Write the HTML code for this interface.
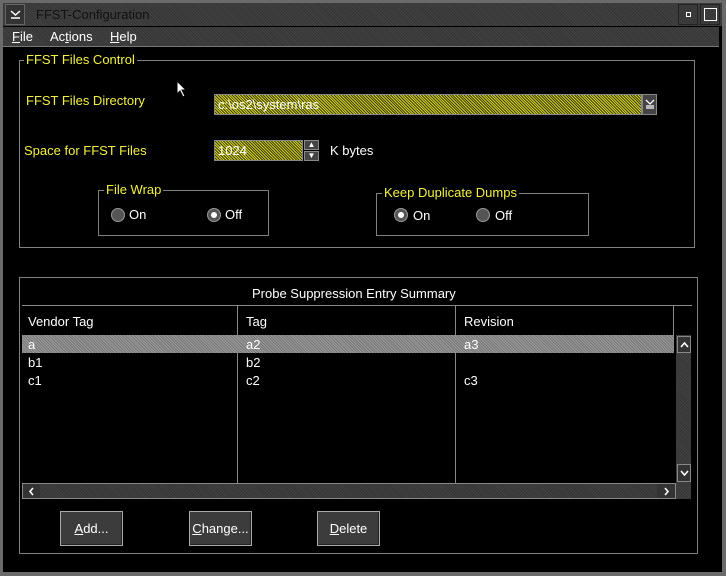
<!DOCTYPE html>
<html><head><style>
*{margin:0;padding:0;box-sizing:border-box}
body{width:726px;height:576px;background:#6a6a6a;position:relative;overflow:hidden;font-family:"Liberation Sans",sans-serif;font-size:13px;color:#fff}
.a{position:absolute}
.y{color:#f4f040}
.dith{background:#3a3a3a;background-image:repeating-linear-gradient(45deg,#444 0 1px,#333 1px 2px)}
.grp{position:absolute;border:1px solid #808080}
.lbl{position:absolute;background:#000;padding:0 2px;top:-9px;left:4px;white-space:nowrap}
.rad{position:absolute;width:14px;height:14px;border-radius:50%;background:#555;border:1px solid #999}
.rad.on::after{content:"";position:absolute;left:3px;top:3px;width:6px;height:6px;border-radius:50%;background:#fff}
.btn{position:absolute;width:63px;height:35px;background:#3c3c3c;border:1px solid #aaa;box-shadow:inset -1px -1px 0 #222;text-align:center;line-height:33px;color:#fff}
.btn u{text-decoration:underline}
.yf{background:#8a8a10;background-image:repeating-linear-gradient(45deg,#d0d020 0 1px,#404010 1px 2px)}
</style></head><body>
<div class="a" style="left:3px;top:3px;width:719px;height:569px;background:#000"></div>
<div class="a dith" style="left:3px;top:3px;width:719px;height:23px"></div>
<div class="a" style="left:5px;top:4px;width:20px;height:21px;background:#333;border:1px solid #666"><svg class="a" style="left:4px;top:4px" width="11" height="11"><path d="M1 2l4.5 4 4.5-4M1 9h9" stroke="#fff" stroke-width="1.5" fill="none"/></svg></div>
<div class="a" style="left:36px;top:7px;color:#111;font-size:13px">FFST-Configuration</div>
<div class="a" style="left:678px;top:4px;width:20px;height:21px;background:#3a3a3a;border:1px solid #222"><div class="a" style="left:7px;top:7px;width:5px;height:5px;border:1px solid #fff"></div></div>
<div class="a" style="left:700px;top:4px;width:20px;height:21px;background:#3a3a3a;border:1px solid #222"><div class="a" style="left:3px;top:3px;width:13px;height:13px;border:1px solid #fff"></div></div>
<div class="a dith" style="left:3px;top:27px;width:716px;height:20px;border-bottom:1px solid #777"></div>
<div class="a" style="left:12px;top:29px"><u>F</u>ile</div>
<div class="a" style="left:50px;top:29px">Ac<u>t</u>ions</div>
<div class="a" style="left:110px;top:29px"><u>H</u>elp</div>

<div class="grp" style="left:19px;top:60px;width:676px;height:188px"><div class="lbl y">FFST Files Control</div></div>
<svg class="a" style="left:176px;top:80px" width="12" height="18"><path d="M1 1v13l3-3 3 6 2-1-3-6h4z" fill="#fff" stroke="#000"/></svg>
<div class="a y" style="left:26px;top:93px">FFST Files Directory</div>
<div class="a yf" style="left:214px;top:94px;width:428px;height:21px;border:1px solid #888"><span style="position:absolute;left:3px;top:2px;color:#fff">c:\os2\system\ras</span></div>
<div class="a" style="left:642px;top:94px;width:15px;height:21px;background:#444;border:1px solid #888"><svg class="a" style="left:2px;top:4px" width="10" height="11"><path d="M1 1l4 4 4-4M1 7h8M1 9h8" stroke="#fff" stroke-width="1.3" fill="none"/></svg></div>
<div class="a y" style="left:24px;top:143px">Space for FFST Files</div>
<div class="a yf" style="left:214px;top:140px;width:89px;height:21px;border:1px solid #888"><span style="position:absolute;left:3px;top:2px;color:#fff">1024</span></div>
<div class="a" style="left:304px;top:140px;width:15px;height:10px;background:#444;border:1px solid #888;font-size:8px;text-align:center;line-height:8px">&#9650;</div>
<div class="a" style="left:304px;top:151px;width:15px;height:10px;background:#444;border:1px solid #888;font-size:8px;text-align:center;line-height:8px">&#9660;</div>
<div class="a" style="left:330px;top:143px">K bytes</div>

<div class="grp" style="left:98px;top:190px;width:171px;height:46px"><div class="lbl y" style="left:5px">File Wrap</div>
<div class="rad" style="left:12px;top:17px"></div><div class="a" style="left:30px;top:16px">On</div>
<div class="rad on" style="left:108px;top:17px"></div><div class="a" style="left:126px;top:16px">Off</div></div>
<div class="grp" style="left:376px;top:193px;width:213px;height:43px"><div class="lbl y" style="left:5px">Keep Duplicate Dumps</div>
<div class="rad on" style="left:17px;top:14px"></div><div class="a" style="left:36px;top:14px">On</div>
<div class="rad" style="left:99px;top:14px"></div><div class="a" style="left:118px;top:14px">Off</div></div>

<div class="grp" style="left:19px;top:277px;width:679px;height:277px"></div>
<div class="a" style="left:252px;top:286px">Probe Suppression Entry Summary</div>
<div class="a" style="left:22px;top:305px;width:670px;height:1px;background:#888"></div>
<div class="a" style="left:237px;top:306px;width:1px;height:177px;background:#888"></div>
<div class="a" style="left:455px;top:306px;width:1px;height:177px;background:#888"></div>
<div class="a" style="left:673px;top:306px;width:1px;height:29px;background:#888"></div>
<div class="a" style="left:28px;top:314px">Vendor Tag</div>
<div class="a" style="left:246px;top:314px">Tag</div>
<div class="a" style="left:464px;top:314px">Revision</div>
<div class="a" style="left:22px;top:335px;width:652px;height:18px;background:#888;background-image:repeating-linear-gradient(45deg,#9a9a9a 0 1px,#777 1px 2px)"></div>
<div class="a" style="left:28px;top:337px">a</div><div class="a" style="left:246px;top:337px">a2</div><div class="a" style="left:464px;top:337px">a3</div>
<div class="a" style="left:28px;top:355px">b1</div><div class="a" style="left:246px;top:355px">b2</div>
<div class="a" style="left:28px;top:373px">c1</div><div class="a" style="left:246px;top:373px">c2</div><div class="a" style="left:464px;top:373px">c3</div>
<div class="a dith" style="left:676px;top:335px;width:15px;height:148px"></div>
<div class="a" style="left:677px;top:336px;width:14px;height:17px;background:#333;border:1px solid #888"><svg class="a" style="left:2px;top:4px" width="9" height="7"><path d="M1 6l3.5-4 3.5 4" stroke="#fff" stroke-width="1.6" fill="none"/></svg></div>
<div class="a" style="left:677px;top:464px;width:14px;height:18px;background:#333;border:1px solid #888"><svg class="a" style="left:2px;top:5px" width="9" height="7"><path d="M1 1l3.5 4 3.5-4" stroke="#fff" stroke-width="1.6" fill="none"/></svg></div>
<div class="a dith" style="left:22px;top:483px;width:654px;height:16px;border:1px solid #888"></div>
<div class="a" style="left:23px;top:484px;width:17px;height:14px;background:#333"><svg class="a" style="left:5px;top:3px" width="7" height="9"><path d="M5 1l-3 3.5 3 3.5" stroke="#fff" stroke-width="1.6" fill="none"/></svg></div>
<div class="a" style="left:657px;top:484px;width:18px;height:14px;background:#333"><svg class="a" style="left:6px;top:3px" width="7" height="9"><path d="M2 1l3 3.5-3 3.5" stroke="#fff" stroke-width="1.6" fill="none"/></svg></div>
<div class="a dith" style="left:676px;top:483px;width:15px;height:16px"></div>

<div class="btn" style="left:60px;top:511px"><u>A</u>dd...</div>
<div class="btn" style="left:189px;top:511px"><u>C</u>hange...</div>
<div class="btn" style="left:317px;top:511px"><u>D</u>elete</div>
</body></html>
